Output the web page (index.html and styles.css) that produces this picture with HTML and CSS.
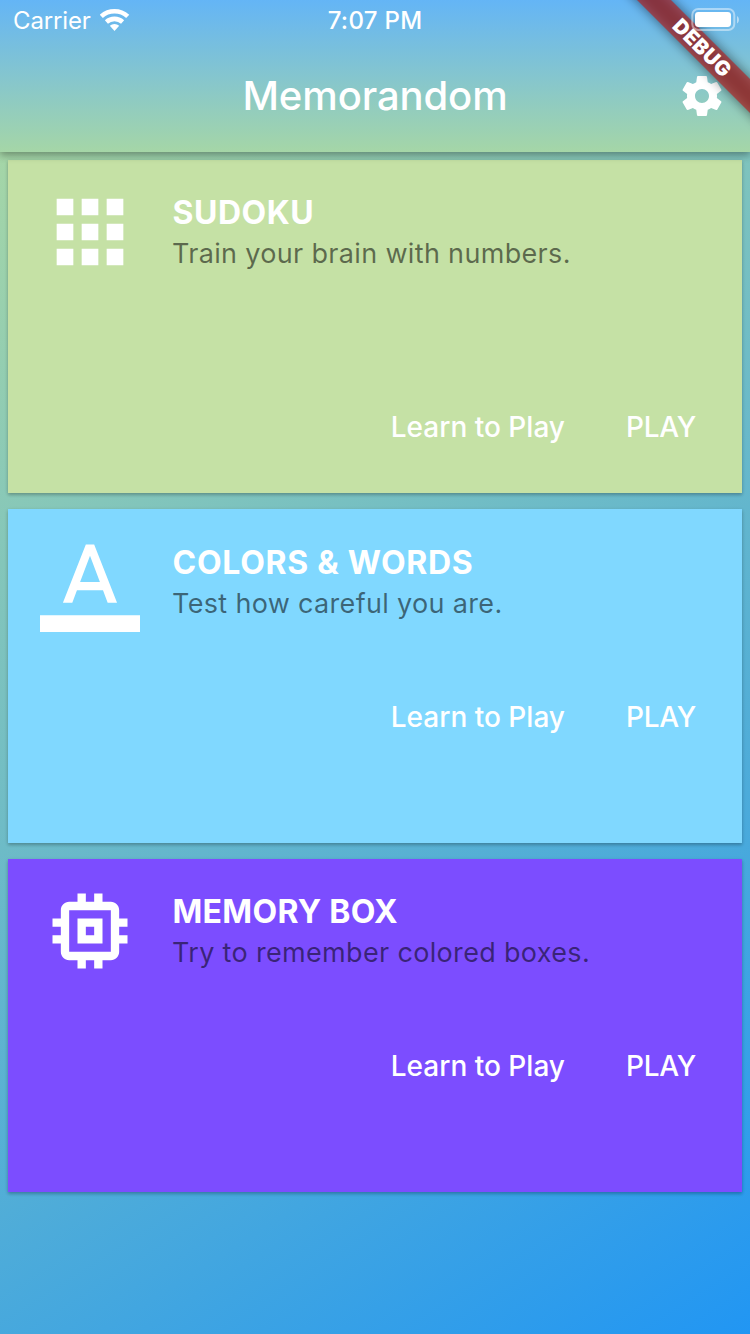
FILE: index.html
```html
<!DOCTYPE html>
<html lang="en">
<head>
<meta charset="utf-8">
<title>Memorandom</title>
<link rel="stylesheet" href="styles.css">
</head>
<body>
<div class="app">
  <header class="header">
    <div class="status">
      <div class="status-left">
        <span class="carrier">Carrier</span>
        <svg class="wifi" viewBox="0 0 30 23">
          <path d="M1.3 8.4A19.7 19.7 0 0 1 27.7 8.4M6.4 14A12.1 12.1 0 0 1 22.6 14" fill="none" stroke="#fff" stroke-width="4.6"/>
          <path d="M14.5 23L9.8 17.8A7 7 0 0 1 19.2 17.8Z" fill="#fff"/>
        </svg>
      </div>
      <span class="clock">7:07 PM</span>
      <svg class="battery" viewBox="0 0 50 25">
        <rect x="2.3" y="2" width="42" height="21" rx="6" fill="none" stroke="#fff" stroke-opacity=".45" stroke-width="2"/>
        <rect x="5" y="5" width="36" height="15" rx="3.4" fill="#fff"/>
        <path d="M47 9c2.6 1.5 2.6 6 0 7.500z" fill="#fff" fill-opacity=".5"/>
      </svg>
    </div>
    <div class="toolbar">
      <h1 class="title">Memorandom</h1>
      <svg class="gear" viewBox="0 0 24 24"><path d="M19.43 12.98c.04-.32.07-.64.07-.98s-.03-.66-.07-.98l2.110-1.650c.19-.15.24-.42.12-.64l-2-3.460c-.12-.22-.39-.3-.61-.22l-2.490 1c-.52-.4-1.080-.73-1.690-.98l-.38-2.650C14.460 2.180 14.250 2 14 2h-4c-.25 0-.46.18-.49.42l-.38 2.650c-.61.25-1.170.59-1.690.98l-2.490-1c-.23-.09-.49 0-.61.22l-2 3.460c-.13.22-.07.49.12.64l2.110 1.650c-.04.32-.07.65-.07.98s.03.66.07.98l-2.110 1.650c-.19.15-.24.42-.12.64l2 3.460c.12.22.39.3.61.22l2.490-1c.52.4 1.080.73 1.690.98l.38 2.650c.03.24.24.42.49.42h4c.25 0 .46-.18.49-.42l.38-2.650c.61-.25 1.170-.59 1.690-.98l2.490 1c.23.09.49 0 .61-.22l2-3.460c.12-.22.07-.49-.12-.64l-2.110-1.650zM12 15.500c-1.930 0-3.500-1.570-3.500-3.500s1.570-3.500 3.500-3.500 3.500 1.570 3.500 3.500-1.570 3.500-3.500 3.500z"/></svg>
    </div>
  </header>
  <main class="games">
    <section class="card sudoku">
      <div class="tile">
        <svg class="icon" viewBox="0 0 24 24"><path d="M4 8h4V4H4v4zm6 12h4v-4h-4v4zm-6 0h4v-4H4v4zm0-6h4v-4H4v4zm6 0h4v-4h-4v4zm6-10v4h4V4h-4zm-6 4h4V4h-4v4zm6 6h4v-4h-4v4zm0 6h4v-4h-4v4z"/></svg>
        <div class="text">
          <h2 class="name">SUDOKU</h2>
          <p class="desc">Train your brain with numbers.</p>
        </div>
      </div>
      <div class="actions"><span>Learn to Play</span><span class="play">PLAY</span></div>
    </section>
    <section class="card colors">
      <div class="tile">
        <svg class="icon" viewBox="0 0 24 24"><path d="M0 20h24v4H0zM11 3L5.500 17h2.250l1.120-3h6.250l1.120 3h2.250L13 3h-2zm-1.380 9L12 5.670 14.380 12H9.620z"/></svg>
        <div class="text">
          <h2 class="name">COLORS &amp; WORDS</h2>
          <p class="desc">Test how careful you are.</p>
        </div>
      </div>
      <div class="actions"><span>Learn to Play</span><span class="play">PLAY</span></div>
    </section>
    <section class="card memory">
      <div class="tile">
        <svg class="icon" viewBox="0 0 24 24"><path d="M15 9H9v6h6V9zm-2 4h-2v-2h2v2zm8-2V9h-2V7c0-1.100-.9-2-2-2h-2V3h-2v2h-2V3H9v2H7c-1.100 0-2 .9-2 2v2H3v2h2v2H3v2h2v2c0 1.100.9 2 2 2h2v2h2v-2h2v2h2v-2h2c1.100 0 2-.9 2-2v-2h2v-2h-2v-2h2zm-4 6H7V7h10v10z"/></svg>
        <div class="text">
          <h2 class="name">MEMORY BOX</h2>
          <p class="desc">Try to remember colored boxes.</p>
        </div>
      </div>
      <div class="actions"><span>Learn to Play</span><span class="play">PLAY</span></div>
    </section>
  </main>
  <div class="corner"><div class="ribbon"><span class="ribbon-text">DEBUG</span></div></div>
</div>
</body>
</html>
```
FILE: styles.css
```css
* { box-sizing: border-box; margin: 0; padding: 0; }
body { font-family: Inter, "Liberation Sans", sans-serif; color: #fff; }
.app { position: relative; width: 750px; height: 1334px; display: flex; flex-direction: column; overflow: hidden; }

.header {
  height: 152px;
  flex: none;
  background: linear-gradient(#64b5f6, #a5d6a7);
  box-shadow: 0 2px 8px rgba(0,0,0,.28), 0 4px 8px rgba(0,0,0,.12);
  position: relative;
}
.status { height: 40px; display: grid; grid-template-columns: 1fr auto 1fr; align-items: center; }
.status-left { display: flex; align-items: center; padding-left: 13px; }
.carrier { font-size: 24px; line-height: 40px; padding-top: 1px; width: 87px; letter-spacing: -.15px; white-space: nowrap; }
.wifi { width: 30px; height: 23px; margin-bottom: 2px; }
.clock { font-size: 24px; font-weight: 500; line-height: 40px; padding-top: 1px; letter-spacing: .3px; }
.battery { width: 50px; height: 25px; justify-self: end; margin-right: 10px; margin-bottom: 3px; position: relative; z-index: 3; }
.toolbar { height: 112px; display: grid; grid-template-columns: 72px 1fr 72px; align-items: center; }
.title { grid-column: 2; text-align: center; font-size: 40px; line-height: 48px; font-weight: 500; letter-spacing: -.1px; }
.gear { width: 48px; height: 48px; fill: #fff; }

.games {
  flex: 1;
  padding: 8px;
  display: flex;
  flex-direction: column;
  gap: 16px;
  background: linear-gradient(147.6deg, #a5d6a7, #2196f3);
}
.card {
  height: 333.33px;
  flex: none;
  display: flex;
  flex-direction: column;
  box-shadow: 0 2px 3px rgba(0,0,0,.2), 0 1px 4px rgba(0,0,0,.1);
}
.sudoku { background: #c5e1a5; gap: 118px; }
.colors { background: #80d8ff; gap: 59px; }
.memory { background: #7c4dff; gap: 58px; }
.tile { display: flex; gap: 32px; padding: 22px 32px 0; height: 129px; }
.colors .tile { padding-top: 23px; }
.icon { width: 100px; height: 100px; fill: #fff; flex: none; }
.text { padding-top: 10px; white-space: nowrap; }
.name { font-size: 32px; line-height: 42px; font-weight: 700; letter-spacing: .5px; padding-left: .5px; }
.colors .name { letter-spacing: .72px; }
.memory .name { letter-spacing: .3px; }
.desc { font-size: 27px; line-height: 40px; color: rgba(0,0,0,.54); font-weight: 400; letter-spacing: .33px; }
.actions { display: flex; justify-content: flex-end; gap: 61px; padding-right: 46px; font-size: 28px; line-height: 40px; font-weight: 500; white-space: nowrap; }
.play { letter-spacing: -.25px; }

/* Diagonal banner over the top-right corner */
.corner { position: absolute; top: 0; right: 0; width: 160px; height: 160px; overflow: hidden; z-index: 2; }
.ribbon {
  position: absolute;
  left: 12px;
  top: 36px;
  width: 200px;
  height: 24px;
  transform: rotate(45deg);
  display: flex;
  align-items: center;
  justify-content: center;
}
.ribbon::before { content: ""; position: absolute; inset: 0; background: rgba(0,0,0,.5); filter: blur(6px); }
.ribbon::after { content: ""; position: absolute; inset: 0; background: rgba(183,28,28,.63); }
.ribbon-text { position: relative; z-index: 1; font-size: 20.5px; line-height: 24px; font-weight: 900; letter-spacing: .3px; }
```
